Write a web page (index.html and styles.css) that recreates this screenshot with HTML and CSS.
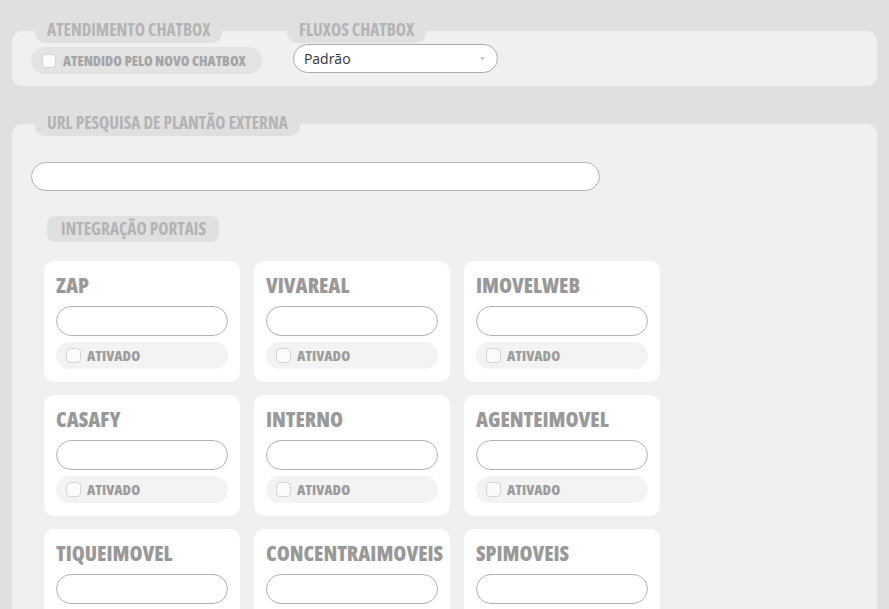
FILE: index.html
```html
<!DOCTYPE html>
<html lang="pt-BR">
<head>
<meta charset="utf-8">
<title>Configurações</title>
<link rel="stylesheet" href="styles.css">
</head>
<body>
<div class="page">
  <section class="panel panel-top">
    <div class="group group-chat">
      <div class="tab">ATENDIMENTO CHATBOX</div>
      <label class="check-pill"><span class="box"></span><span class="check-label">ATENDIDO PELO NOVO CHATBOX</span></label>
    </div>
    <div class="group group-flux">
      <div class="tab">FLUXOS CHATBOX</div>
      <div class="select"><span class="select-value">Padrão</span><span class="arrow">▼</span></div>
    </div>
  </section>

  <section class="panel panel-main">
    <div class="tab tab-url">URL PESQUISA DE PLANTÃO EXTERNA</div>
    <div class="field url-field"></div>
    <div class="subtab">INTEGRAÇÃO PORTAIS</div>
    <div class="grid">
      <div class="card"><div class="card-title">ZAP</div><div class="field card-field"></div><label class="card-check"><span class="box"></span><span class="check-label">ATIVADO</span></label></div>
      <div class="card"><div class="card-title">VIVAREAL</div><div class="field card-field"></div><label class="card-check"><span class="box"></span><span class="check-label">ATIVADO</span></label></div>
      <div class="card"><div class="card-title">IMOVELWEB</div><div class="field card-field"></div><label class="card-check"><span class="box"></span><span class="check-label">ATIVADO</span></label></div>
      <div class="card"><div class="card-title">CASAFY</div><div class="field card-field"></div><label class="card-check"><span class="box"></span><span class="check-label">ATIVADO</span></label></div>
      <div class="card"><div class="card-title">INTERNO</div><div class="field card-field"></div><label class="card-check"><span class="box"></span><span class="check-label">ATIVADO</span></label></div>
      <div class="card"><div class="card-title">AGENTEIMOVEL</div><div class="field card-field"></div><label class="card-check"><span class="box"></span><span class="check-label">ATIVADO</span></label></div>
      <div class="card"><div class="card-title">TIQUEIMOVEL</div><div class="field card-field"></div><label class="card-check"><span class="box"></span><span class="check-label">ATIVADO</span></label></div>
      <div class="card"><div class="card-title">CONCENTRAIMOVEIS</div><div class="field card-field"></div><label class="card-check"><span class="box"></span><span class="check-label">ATIVADO</span></label></div>
      <div class="card"><div class="card-title">SPIMOVEIS</div><div class="field card-field"></div><label class="card-check"><span class="box"></span><span class="check-label">ATIVADO</span></label></div>
    </div>
  </section>
</div>
</body>
</html>
```

FILE: styles.css
```css
* { box-sizing: border-box; }
html, body { height: 100%; }
body {
  margin: 0;
  background: #e0e0e0;
  overflow: hidden;
  font-family: "Open Sans", "Liberation Sans", sans-serif;
}
.page { padding: 31px 12px 0; }

.tab, .subtab, .check-label, .card-title {
  font-family: "Open Sans", "Liberation Sans Narrow", sans-serif;
  font-weight: 700;
  font-stretch: 75%;
}

.panel {
  background: #f0f0f0;
  border-radius: 10px;
}
.panel-top {
  display: flex;
  padding: 0 0 12px 19px;
  gap: 25px;
}
.group { margin-top: -14px; display: flex; flex-direction: column; align-items: flex-start; }

.tab {
  height: 26px;
  line-height: 26px;
  padding: 0 12px;
  margin-left: 4px;
  background: #e0e0e0;
  border-radius: 0 0 10px 10px;
  color: #b3b3b3;
  font-size: 17.3px;
  white-space: nowrap;
}
.group-flux .tab { margin-left: 0; }

.check-pill {
  margin-top: 4px;
  height: 27px;
  display: flex;
  align-items: center;
  gap: 7px;
  padding: 0 16px 0 11px;
  background: #e3e3e3;
  border-radius: 14px;
}
.box {
  width: 14px;
  height: 14px;
  border: 1px solid #d4d4d4;
  background: #fbfbfb;
  border-radius: 4px;
  flex: none;
}
.check-label {
  color: #9c9c9c;
  font-size: 14.5px;
  font-weight: 800;
  white-space: nowrap;
}
.check-pill .check-label { color: #a5a5a5; font-size: 14px; }

.select {
  margin: 1px 0 0 6px;
  width: 205px;
  height: 29px;
  border: 1px solid #ababab;
  border-radius: 15px;
  background: #fff;
  display: flex;
  align-items: center;
  justify-content: space-between;
  padding: 0 11px 0 10px;
}
.select-value { font-size: 14px; color: #333; }
.arrow { font-size: 7px; color: #c8c8c8; }

.panel-main {
  margin-top: 38px;
  padding: 0 0 20px 0;
  min-height: 600px;
  display: flex;
  flex-direction: column;
  align-items: flex-start;
}
.tab-url {
  margin: -14px 0 0 23px;
}
.field {
  background: #fff;
  border: 1px solid #b3b3b3;
  border-radius: 15px;
}
.url-field {
  margin: 26px 0 0 19px;
  width: 569px;
  height: 29px;
}
.subtab {
  margin: 25px 0 0 35px;
  height: 26px;
  line-height: 26px;
  padding: 0 13px 0 14px;
  background: #e0e0e0;
  border-radius: 8px;
  color: #b3b3b3;
  font-size: 17.3px;
}
.grid {
  margin: 19px 0 0 32px;
  display: grid;
  grid-template-columns: repeat(3, 196px);
  column-gap: 14px;
  row-gap: 13px;
}
.card {
  background: #fff;
  border-radius: 10px;
  padding: 12px 12px 13px;
}
.card-title {
  height: 26px;
  line-height: 24px;
  margin-bottom: 7px;
  color: #999;
  font-size: 21px;
  font-weight: 800;
  white-space: nowrap;
}
.card-field { height: 30px; }
.card-check {
  margin-top: 6px;
  height: 27px;
  display: flex;
  align-items: center;
  gap: 6px;
  padding-left: 10px;
  background: #f3f3f3;
  border-radius: 14px;
}
.card-check .box { width: 15px; height: 15px; }
```
